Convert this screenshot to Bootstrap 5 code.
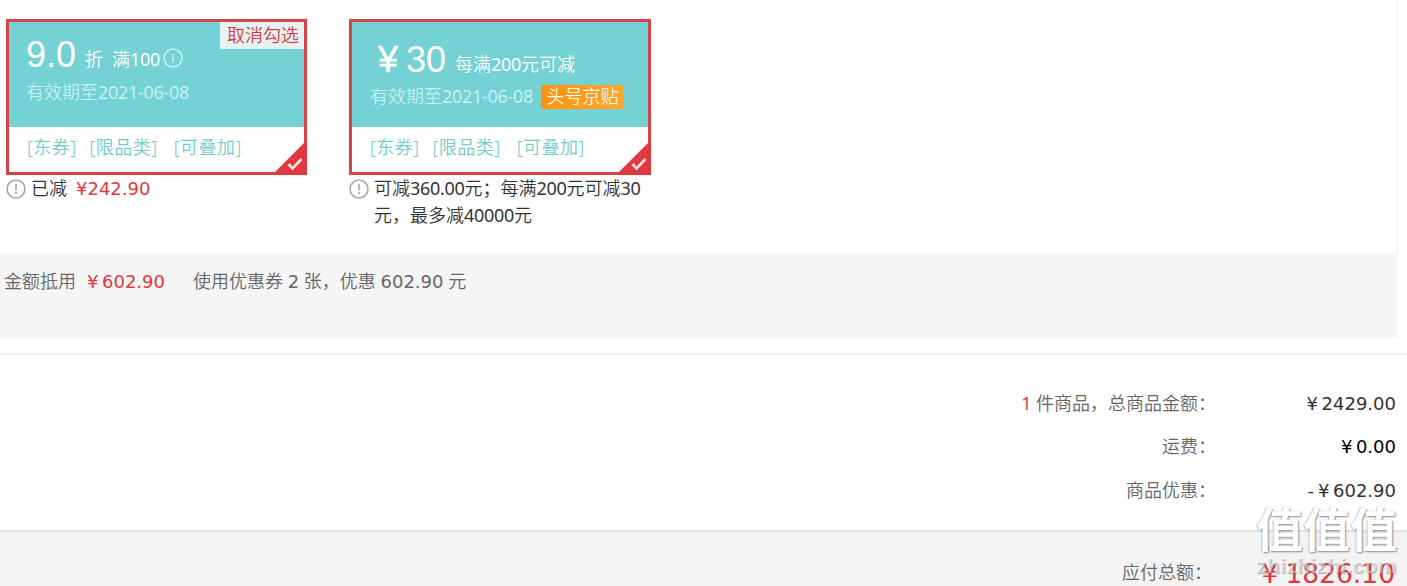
<!DOCTYPE html>
<html lang="zh-CN">
  <head>
    <meta charset="UTF-8" />
    <title>订单结算</title>
    <meta name="viewport" content="width=device-width, initial-scale=1" />

    <link
      href="https://cdn.jsdelivr.net/npm/bootstrap@5.3.0/dist/css/bootstrap.min.css"
      rel="stylesheet"
    />
    <style>
      body {
        font-family: "Noto Sans", "Noto Sans CJK SC", sans-serif;
        font-size: 18px;
        font-weight: 350;
        line-height: 27px;
        color: #333;
        background-color: #fff;
      }
      .verdana {
        font-family: "DejaVu Sans", "Noto Sans CJK SC", sans-serif;
        font-weight: 400;
      }
      .red {
        color: #e1373e;
      }
      .grey {
        color: #666;
      }
      .num {
        font-weight: 400;
        letter-spacing: -0.3px;
      }
      .yen {
        display: inline-block;
        width: 15px;
      }
      .coupon-area {
        width: 1398px;
        height: 253px;
        padding: 19px 0 0 6px;
        gap: 42px;
        border-right: 2px solid #f6f6f6;
      }
      .coupon {
        width: 301px;
        height: 156px;
        border: 3px solid #d8434a;
      }
      .coupon-wide {
        width: 302px;
      }
      .coupon-top {
        height: 105px;
        padding-left: 17px;
        background-color: #74d2d4;
      }
      .coupon-wide .coupon-top {
        padding-left: 18px;
      }
      .offer {
        height: 57px;
        padding-top: 9px;
      }
      .coupon-wide .offer {
        height: 61px;
        padding-top: 18px;
      }
      .face {
        font: 400 36px/40px "Liberation Sans", sans-serif;
      }
      .face-yen {
        display: inline-block;
        width: 28px;
        -webkit-text-stroke: 0.5px #fff;
      }
      .terms {
        position: relative;
        top: -1px;
        margin-left: 9px;
      }
      .info {
        margin: 5px 0 0 3px;
      }
      .expires {
        color: #c4f0f0;
      }
      .tags {
        height: 45px;
        padding: 7px 0 0 18px;
        gap: 13px;
        letter-spacing: 0.5px;
        color: #74cccd;
      }
      .tags span:last-child {
        margin-left: 3px;
      }
      .cancel {
        width: 84px;
        height: 27px;
        padding-left: 7px;
        background-color: #e3f2f3;
      }
      .sticker {
        width: 83px;
        height: 24px;
        line-height: 23px;
        border-radius: 3px;
        background: linear-gradient(90deg, #ff930f, #fda52f);
        color: #fff6e5;
      }
      .tick {
        right: -3px;
        bottom: -3px;
      }
      .note {
        gap: 5px;
      }
      .note svg {
        flex: none;
        margin-top: 4px;
      }
      .summary-bar {
        width: 1398px;
        height: 85px;
        padding: 15px 0 0 4px;
        background-color: #f5f5f5;
      }
      .used {
        margin: 0 28px 0 11px;
      }
      .totals {
        height: 177px;
        margin-top: 15px;
        padding: 27px 11px 0 0;
        border-top: 2px solid #efefef;
      }
      .total-line {
        height: 43.4px;
        line-height: 43px;
      }
      .amount {
        width: 180px;
      }
      .pay-bar {
        height: 56px;
        padding: 27px 12px 0 0;
        border-top: 2px solid #e2e2e2;
        background-color: #f3f3f3;
      }
      .pay-amount {
        width: 183px;
        font-size: 26.5px;
        line-height: 29px;
      }
      .pay-amount .yen {
        width: 24px;
      }
      .watermark {
        right: 6px;
        bottom: 0;
        width: 145px;
        height: 84px;
        color: #fff;
      }
      .mark-zh {
        font: 700 47px/50px "Noto Sans CJK SC", sans-serif;
        text-shadow: 1px 1px 2px #888, -1px 0 1px #ccc;
      }
      .mark-en {
        margin-top: 2px;
        font: 700 21px/24px "Liberation Sans", sans-serif;
        letter-spacing: 0.3px;
        color: rgba(255, 255, 255, 0.45);
        text-shadow: 1px 1px 1px rgba(110, 110, 110, 0.5);
      }
    </style>
  </head>
  <body class="overflow-hidden">
    <div class="coupon-area d-flex align-items-start">
      <div>
        <div class="coupon position-relative">
          <div class="coupon-top text-white">
            <div class="offer d-flex align-items-baseline">
              <span class="face pt-1">9.0</span>
              <span class="terms">折</span>
              <span class="terms">满<span class="num">100</span></span>
              <svg class="info align-self-center" width="20" height="20" viewBox="0 0 20 20" fill="none" stroke="#c4f0f0" stroke-width="1.7">
                <circle cx="10" cy="10" r="9" />
                <path d="M10 6v1.5M10 8.5v5.5" />
              </svg>
            </div>
            <div class="expires">有效期至<span class="num">2021-06-08</span></div>
          </div>
          <div class="tags d-flex">
            <span>[东券]</span><span>[限品类]</span><span>[可叠加]</span>
          </div>
          <div class="cancel red position-absolute top-0 end-0">取消勾选</div>
          <svg class="tick position-absolute" width="35" height="35" viewBox="0 0 35 35">
            <path d="M35 0v35H0z" fill="#e1373e" />
            <path d="M16.500 24l4 4.500 9-9.500" fill="none" stroke="#fbdcdc" stroke-width="2.800" />
          </svg>
        </div>
        <div class="note d-flex">
          <svg width="20" height="20" viewBox="0 0 20 20" fill="none" stroke="#aaa" stroke-width="1.7">
            <circle cx="10" cy="10" r="9" />
            <path d="M10 5v6.500M10 13v2" />
          </svg>
          <span>已减</span>
          <span class="verdana red ms-1">¥242.90</span>
        </div>
      </div>

      <div>
        <div class="coupon coupon-wide position-relative">
          <div class="coupon-top text-white">
            <div class="offer d-flex align-items-baseline">
              <span class="face ms-1 ps-1"><span class="face-yen">¥</span>30</span>
              <span class="terms">每满<span class="num">200</span>元可减</span>
            </div>
            <div class="d-flex align-items-center">
              <span class="expires">有效期至<span class="num">2021-06-08</span></span>
              <span class="sticker text-center ms-2">头号京贴</span>
            </div>
          </div>
          <div class="tags d-flex">
            <span>[东券]</span><span>[限品类]</span><span>[可叠加]</span>
          </div>
          <svg class="tick position-absolute" width="35" height="35" viewBox="0 0 35 35">
            <path d="M35 0v35H0z" fill="#e1373e" />
            <path d="M16.500 24l4 4.500 9-9.500" fill="none" stroke="#fbdcdc" stroke-width="2.800" />
          </svg>
        </div>
        <div class="note d-flex">
          <svg width="20" height="20" viewBox="0 0 20 20" fill="none" stroke="#aaa" stroke-width="1.7">
            <circle cx="10" cy="10" r="9" />
            <path d="M10 5v6.500M10 13v2" />
          </svg>
          <span>可减<span class="num">360.00</span>元；每满<span class="num">200</span>元可减<span class="num">30</span><br />元，最多减<span class="num">40000</span>元</span>
        </div>
      </div>
    </div>

    <div class="summary-bar d-flex grey">
      <span>金额抵用</span>
      <span class="used verdana red"><span class="yen">¥</span>602.90</span>
      <span>使用优惠券 <span class="verdana">2</span> 张，优惠 <span class="verdana">602.90</span> 元</span>
    </div>

    <div class="totals">
      <div class="total-line d-flex justify-content-end">
        <span class="grey"><span class="red num">1</span> 件商品，总商品金额：</span>
        <span class="amount verdana text-end"><span class="yen text-start">¥</span>2429.00</span>
      </div>
      <div class="total-line d-flex justify-content-end">
        <span class="grey">运费：</span>
        <span class="amount verdana text-end text-black"><span class="yen text-start">¥</span>0.00</span>
      </div>
      <div class="total-line d-flex justify-content-end">
        <span class="grey">商品优惠：</span>
        <span class="amount verdana text-end">-<span class="yen text-start ms-1">¥</span>602.90</span>
      </div>
    </div>

    <div class="pay-bar d-flex justify-content-end position-relative">
      <span class="grey">应付总额：</span>
      <span class="pay-amount verdana red text-end"><span class="yen text-start">¥</span>1826.10</span>
      <div class="watermark position-absolute text-nowrap">
        <div class="mark-zh">值值值</div>
        <div class="mark-en">zhizhizhi.com</div>
      </div>
    </div>
    <script src="https://cdn.jsdelivr.net/npm/bootstrap@5.3.0/dist/js/bootstrap.bundle.min.js"></script>
  </body>
</html>
